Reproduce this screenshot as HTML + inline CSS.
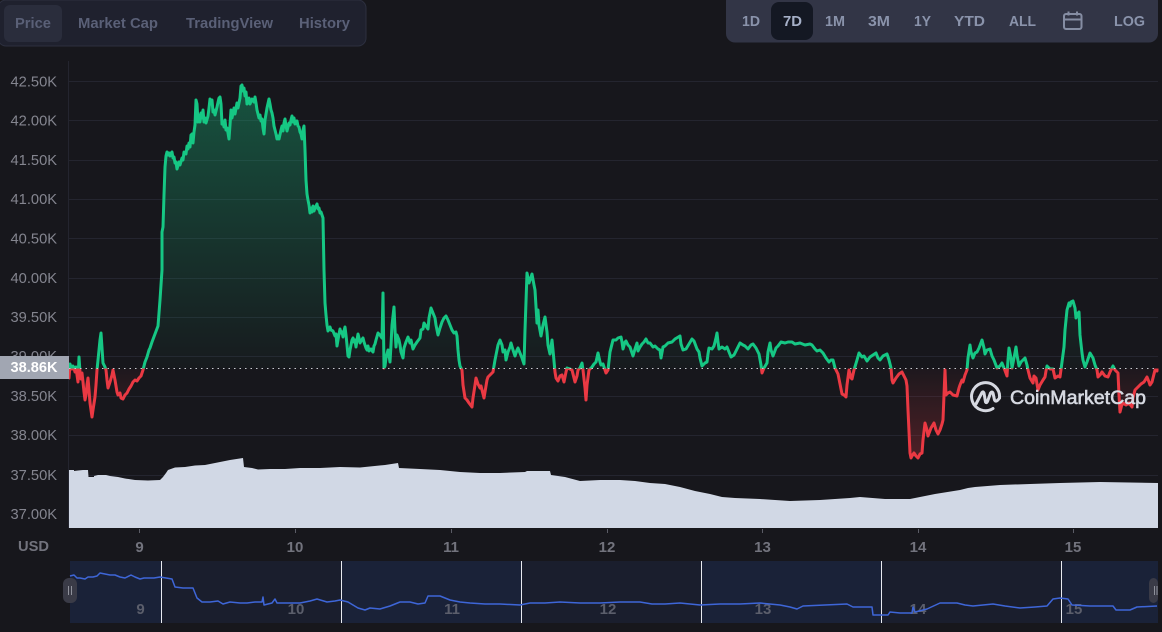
<!DOCTYPE html>
<html><head><meta charset="utf-8"><style>
html,body{margin:0;padding:0;background:#17171c;width:1162px;height:632px;overflow:hidden}
svg{display:block;font-family:"Liberation Sans",sans-serif}
.y{font-size:14.7px;fill:#84858f}
.t{font-size:14.5px;font-weight:bold;fill:#5a6077}
.r{font-size:15px;font-weight:bold;fill:#8a93ab}
.x{font-size:15px;font-weight:bold;fill:#72737d;text-anchor:middle}
.n{font-size:15px;font-weight:bold;fill:#5b5e6b;text-anchor:middle}
</style></head><body>
<svg width="1162" height="632" viewBox="0 0 1162 632" xmlns="http://www.w3.org/2000/svg">
<defs>
<linearGradient id="g" gradientUnits="userSpaceOnUse" x1="0" y1="85" x2="0" y2="368"><stop offset="0" stop-color="#16c784" stop-opacity=".34"/><stop offset="1" stop-color="#16c784" stop-opacity=".02"/></linearGradient>
<linearGradient id="h" gradientUnits="userSpaceOnUse" x1="0" y1="368" x2="0" y2="457"><stop offset="0" stop-color="#ea3943" stop-opacity=".03"/><stop offset="1" stop-color="#ea3943" stop-opacity=".26"/></linearGradient>
<clipPath id="up"><rect x="69" y="60" width="1090" height="308.5"/></clipPath>
<clipPath id="dn"><rect x="69" y="368.5" width="1090" height="160"/></clipPath>
<polyline id="p" points="69,368.500 69,378 70,364 71,367 72,369 73,366 74,368 75,372 76,367 77,375 78,382 79,357 80,372 81,379 82,373 83,382 84,392 85,400 86,395 87,385 88,378 89,390 90,403 92,417 93,410 95,397 96,385 97,370 99,350 100,340 101,333 102,348 103,363 105,367 106,370 107,380 108,388 110,382 112,375 113,370 115,380 117,392 118,395 120,393 121,398 123,399 125,395 127,393 129,389 131,386 133,382 135,380 137,381 139,378 141,376 143,370 145,362 147,357 149,350 150,348 152,342 155,334 158,326 160,300 162,270 162,232 163,227 164,195 165,167 166,156 167,152 168,155 169,153 170,156 171,153 172,152 173,158 174,157 175,163 176,162 177,169 179,162 180,165 182,158 183,160 184,152 186,154 187,146 188,149 189,143 190,147 191,135 192,134 193,143 194,132 195,125 196,100 197,104 198,122 199,115 200,122 201,113 202,118 203,110 204,122 205,118 206,123 208,116 209,108 210,99 211,104 212,100 213,112 214,110 215,115 217,107 219,98 220,97 221,104 222,124 223,122 224,127 225,120 226,130 227,128 228,133 229,139 230,125 231,110 232,118 234,108 235,114 237,103 238,108 240,98 241,86 242,85 243,91 244,88 245,96 246,92 247,104 249,98 250,104 252,99 254,102 255,97 256,103 257,110 258,114 259,118 260,115 261,121 262,119 263,128 264,134 265,120 267,108 269,99 270,104 271,110 272,113 273,118 274,126 275,130 276,134 277,139 278,136 279,139 281,130 282,126 283,131 284,123 285,119 286,126 287,131 288,127 289,123 290,125 291,120 292,116 293,122 294,118 295,124 297,121 298,126 299,127 300,132 301,134 302,139 303,130 304,126 305,150 306,180 307,194 308,200 309,205 310,213 311,208 312,212 313,206 314,211 315,208 316,206 317,204 318,209 319,208 320,213 321,212 322,215 323,218 324,270 325,303 326,315 327,325 328,331 330,327 331,330 333,331 335,336 336,334 337,346 338,340 339,334 340,329 341,333 342,332 343,337 344,331 345,327 346,335 347,345 348,356 349,357 350,350 351,345 352,340 353,338 354,342 355,340 356,347 357,340 358,334 359,338 360,343 361,341 363,338 364,342 365,345 366,348 367,350 368,346 369,351 371,349 373,352 374,346 375,344 376,340 378,333 380,335 382,338 383,293 384,368 385,366 386,358 388,350 389,355 390,362 391,345 392,325 394,307 395,330 396,347 397,335 399,340 400,345 401,352 403,358 404,348 406,342 408,337 410,343 411,340 413,349 415,345 417,342 420,338 421,330 423,329 424,323 426,326 428,329 429,318 431,308 433,313 435,318 436,325 438,335 440,328 442,322 444,318 446,316 448,320 450,325 452,330 454,333 456,332 457,336 458,350 459,360 460,366 462,370 463,385 465,398 467,400 469,403 472,407 473,398 475,385 476,378 478,384 480,388 481,386 483,394 484,398 485,392 487,380 488,377 490,375 493,372 495,360 497,350 498,345 500,340 502,345 503,352 505,350 506,360 508,352 510,347 511,343 513,350 515,356 517,350 518,348 520,353 522,358 524,364 525,330 527,273 529,283 530,280 532,274 534,285 535,290 537,323 538,310 539,325 541,336 543,325 545,317 547,332 548,345 550,354 552,340 553,350 555,372 556,378 558,381 560,376 562,375 564,382 566,372 567,368 570,369 572,370 575,382 577,376 578,370 580,368 582,363 583,370 585,388 586,400 587,385 589,370 592,367 594,364 596,362 598,353 600,362 601,365 603,364 606,373 608,370 610,352 613,340 616,340 618,338 621,337 622,342 623,349 625,342 626,341 628,345 630,347 633,356 635,349 637,343 638,351 640,347 642,344 644,342 646,339 648,343 650,343 653,347 655,346 658,349 660,350 661,358 663,347 665,346 668,343 672,342 675,339 680,336 681,344 683,350 686,349 689,344 692,339 694,341 697,349 699,352 700,358 702,366 705,363 707,362 708,354 709,348 712,349 714,346 716,338 717,333 718,342 719,349 722,347 725,349 727,347 729,352 731,357 734,355 737,349 740,343 743,345 745,346 748,349 751,345 753,344 756,348 759,354 761,365 762,373 764,368 767,363 768,352 770,343 771,350 773,356 776,348 778,346 781,342 785,343 788,342 792,342 795,344 800,343 805,345 810,344 812,345 815,349 817,351 820,350 823,353 826,358 829,362 831,360 833,360 835,368 838,374 840,384 842,394 844,395 846,397 847,385 849,370 851,378 852,379 854,370 857,360 859,353 862,357 864,356 867,361 870,357 873,355 876,353 878,358 880,360 883,356 885,355 887,354 889,360 891,368 892,380 893,383 896,378 899,374 902,372 904,376 906,380 907,386 908,410 910,453 911,458 912,456 914,453 916,456 918,458 920,454 922,453 923,440 925,423 927,430 928,436 931,428 934,423 936,430 938,434 940,430 942,424 943,420 945,370 946,395 948,393 950,392 953,395 957,396 959,388 960,385 962,380 963,382 965,375 967,370 968,358 970,345 971,352 973,358 975,353 977,352 979,348 982,340 984,348 985,354 987,350 990,349 992,356 994,360 997,368 1000,366 1002,363 1004,368 1007,376 1008,360 1009,348 1011,358 1012,368 1014,358 1016,347 1017,355 1019,366 1021,362 1023,360 1025,358 1027,365 1028,370 1030,378 1033,383 1034,376 1036,378 1038,390 1040,385 1043,380 1045,377 1046,371 1047,366 1050,369 1053,369 1055,378 1058,376 1060,377 1062,362 1064,347 1065,330 1067,310 1069,303 1070,306 1071,302 1073,301 1075,308 1076,318 1078,313 1079,312 1080,335 1082,353 1083,360 1085,367 1087,362 1090,353 1093,358 1095,365 1097,370 1098,377 1100,375 1102,372 1105,376 1108,377 1110,372 1113,366 1115,370 1118,373 1119,395 1120,412 1122,404 1123,403 1126,405 1129,403 1132,407 1133,398 1135,390 1138,387 1141,384 1144,382 1147,377 1149,382 1150,385 1152,382 1155,370 1157,371 1157,368.500"/>
</defs>
<rect width="1162" height="632" fill="#17171c"/>

<!-- tabs -->
<rect x="-2" y="0" width="368" height="46" rx="8" fill="#1f212e" stroke="#2c2f3e"/>
<rect x="4" y="5" width="58" height="37" rx="6" fill="#2a2d3c"/>
<text class="t" x="15" y="28" textLength="36" lengthAdjust="spacingAndGlyphs">Price</text>
<text class="t" x="78" y="28" textLength="80" lengthAdjust="spacingAndGlyphs">Market Cap</text>
<text class="t" x="186" y="28" textLength="87" lengthAdjust="spacingAndGlyphs">TradingView</text>
<text class="t" x="299" y="28" textLength="51" lengthAdjust="spacingAndGlyphs">History</text>

<!-- range -->
<rect x="726" y="-8" width="432" height="50.500" rx="9" fill="#323546"/>
<rect x="771" y="2" width="42" height="38" rx="8" fill="#141823"/>
<text class="r" x="742" y="26" textLength="18" lengthAdjust="spacingAndGlyphs">1D</text>
<text class="r" x="783" y="26" textLength="19" lengthAdjust="spacingAndGlyphs" style="fill:#a6b0c8">7D</text>
<text class="r" x="825" y="26" textLength="20" lengthAdjust="spacingAndGlyphs">1M</text>
<text class="r" x="868" y="26" textLength="22" lengthAdjust="spacingAndGlyphs">3M</text>
<text class="r" x="914" y="26" textLength="17" lengthAdjust="spacingAndGlyphs">1Y</text>
<text class="r" x="954" y="26" textLength="31" lengthAdjust="spacingAndGlyphs">YTD</text>
<text class="r" x="1009" y="26" textLength="27" lengthAdjust="spacingAndGlyphs">ALL</text>
<text class="r" x="1114" y="26" textLength="31" lengthAdjust="spacingAndGlyphs">LOG</text>
<g fill="none" stroke="#858da3" stroke-width="2"><rect x="1064" y="14" width="17.500" height="15" rx="2"/><path d="M1065 19.500H1081M1068.500 11.500V15.500M1077 11.500V15.500"/></g>

<!-- grid -->
<g stroke="#24252f" stroke-width="1" fill="none">
<path d="M68.500 61V528"/>
<path d="M69 81.500H1158M69 120.500H1158M69 160.500H1158M69 199.500H1158M69 238.500H1158M69 278.500H1158M69 317.500H1158M69 356.500H1158M69 396.500H1158M69 435.500H1158M69 475.500H1158M69 514.500H1158"/>
</g>
<g>
<text class="y" x="10.500" y="86.500">42.50K</text>
<text class="y" x="10.500" y="125.500">42.00K</text>
<text class="y" x="10.500" y="165">41.50K</text>
<text class="y" x="10.500" y="204">41.00K</text>
<text class="y" x="10.500" y="243.500">40.50K</text>
<text class="y" x="10.500" y="283">40.00K</text>
<text class="y" x="10.500" y="322">39.50K</text>
<text class="y" x="10.500" y="361">39.00K</text>
<text class="y" x="10.500" y="401">38.50K</text>
<text class="y" x="10.500" y="440">38.00K</text>
<text class="y" x="10.500" y="480">37.50K</text>
<text class="y" x="10.500" y="519">37.00K</text>
</g>

<!-- fills -->
<use href="#p" fill="url(#g)" stroke="none" clip-path="url(#up)"/>
<use href="#p" fill="url(#h)" stroke="none" clip-path="url(#dn)"/>

<!-- volume -->
<polygon fill="#d1d8e5" points="69,470 74,470 74,471 78,470.500 83,470 88,470 88.500,477 94,477 94,476 98,475 106,475 110,476 118,477 125,478.500 135,480 148,480.500 160,480 163,477 166,473 168,470 175,467.500 185,467 195,465.500 205,465 215,463 230,460 243,458 244,467 252,468 258,469.500 270,469 285,469 300,468 320,468 340,467 360,467.500 385,465 398,463 399,468 420,469 440,470 460,472 480,473 500,473 525,472 527,471 550,471 551,475 565,477 580,481 600,480 620,480 635,481 650,483 665,484 680,487 695,491 710,494 722,497 735,498 760,499 790,501 820,500 850,498 860,497 885,499 910,499 935,494 960,490 968,488 975,487 1000,485 1030,484 1060,483 1100,482 1158,483 1158,528 69,528"/>

<!-- line -->
<use href="#p" fill="none" stroke="#16c784" stroke-width="3" stroke-linejoin="round" clip-path="url(#up)"/>
<use href="#p" fill="none" stroke="#ea3943" stroke-width="3" stroke-linejoin="round" clip-path="url(#dn)"/>
<path d="M69 368.500H1158" stroke="#c8cad0" stroke-width="1" stroke-dasharray="1.500 4" fill="none"/>

<!-- base label -->
<rect x="0" y="356" width="69" height="23" fill="#a1a6b2"/>
<text x="10.500" y="372" font-size="14.700" font-weight="bold" fill="#fff" textLength="47" lengthAdjust="spacingAndGlyphs">38.86K</text>

<!-- watermark -->
<g fill="none" stroke="#d6d9e1" stroke-width="3" stroke-linecap="round" stroke-linejoin="round">
<path d="M999.500 398A14 14 0 1 0 993 408.500"/>
<path d="M976 404L982 392.500Q983 391 984 393L985.500 402Q986.500 403.500 987.500 401.500L990.500 393Q992 391 993 393L994.500 400Q996 403 999.500 398"/>
</g>
<text x="1010" y="404" font-size="19.500" fill="#d6d9e1" stroke="#d6d9e1" stroke-width=".6" textLength="136" lengthAdjust="spacingAndGlyphs">CoinMarketCap</text>

<!-- x axis -->
<path d="M139.500 529V533M295.500 529V533M451.500 529V533M607.500 529V533M762.500 529V533M918.500 529V533M1073.500 529V533" stroke="#5b5c66" fill="none"/>
<text x="18" y="551" font-size="15" font-weight="bold" fill="#72737d" textLength="31" lengthAdjust="spacingAndGlyphs">USD</text>
<text class="x" x="139.500" y="552">9</text>
<text class="x" x="295" y="552">10</text>
<text class="x" x="451" y="552">11</text>
<text class="x" x="607" y="552">12</text>
<text class="x" x="762.500" y="552">13</text>
<text class="x" x="918" y="552">14</text>
<text class="x" x="1073" y="552">15</text>

<!-- navigator -->
<rect x="70" y="561" width="1088" height="62" fill="#1a2238"/>
<rect x="161" y="561" width="180" height="62" fill="#1a1e2d"/>
<rect x="521" y="561" width="180" height="62" fill="#1a1e2d"/>
<rect x="881" y="561" width="180" height="62" fill="#1a1e2d"/>
<text class="n" x="140.500" y="614">9</text>
<text class="n" x="296" y="614">10</text>
<text class="n" x="452" y="614">11</text>
<text class="n" x="608" y="614">12</text>
<text class="n" x="763" y="614">13</text>
<text class="n" x="918" y="614">14</text>
<text class="n" x="1074" y="614">15</text>
<path d="M161.500 561V623M341.500 561V623M521.500 561V623M701.500 561V623M881.500 561V623M1061.500 561V623" stroke="#e8eaf0" stroke-width="1" fill="none"/>
<polyline fill="none" stroke="#3e66d8" stroke-width="1.500" stroke-linejoin="round" points="70,576 74,575 77,578 80,578 85,579 88,577 93,577 97,576 100,573 105,574 110,575 115,575 120,577 125,578 131,575 135,577 140,579 144,578 148,578 154,578 160,577 172,579 175,587 183,588 193,588 197,598 202,602 210,602 218,601 223,604 230,602 240,603 247,603 255,602 262,602 263,597 264,605 272,603 275,599 277,603 290,603 300,603 310,601 317,599 327,602 335,601 340,600 348,602 358,608 365,610 370,608 380,609 390,606 400,602 410,602 418,604 425,603 428,596 440,596 450,600 460,602 470,603 485,604 500,604 520,605 530,603 545,603 560,602 580,603 600,603 620,602 640,602 652,604 665,604 680,603 700,605 720,604 740,604 760,603 780,605 790,607 797,609 803,606 825,605 847,604 853,607 872,607 873,615 888,615 890,612 900,613 912,613 913,607 915,612 927,609 940,603 957,603 965,605 973,606 983,605 993,604 1005,606 1020,608 1035,607 1047,606 1053,599 1060,598 1068,599 1072,605 1090,606 1113,606 1116,610 1130,610 1137,607 1157,606"/>
<rect x="63" y="578" width="14" height="25" rx="6" fill="#3a3b47"/>
<rect x="1149" y="578" width="9" height="25" rx="5" fill="#3a3b47"/>
<path d="M68.500 586V595M71.500 586V595M1154.500 586V595M1157 586V595" stroke="#8f919b" fill="none"/>
</svg>
</body></html>
